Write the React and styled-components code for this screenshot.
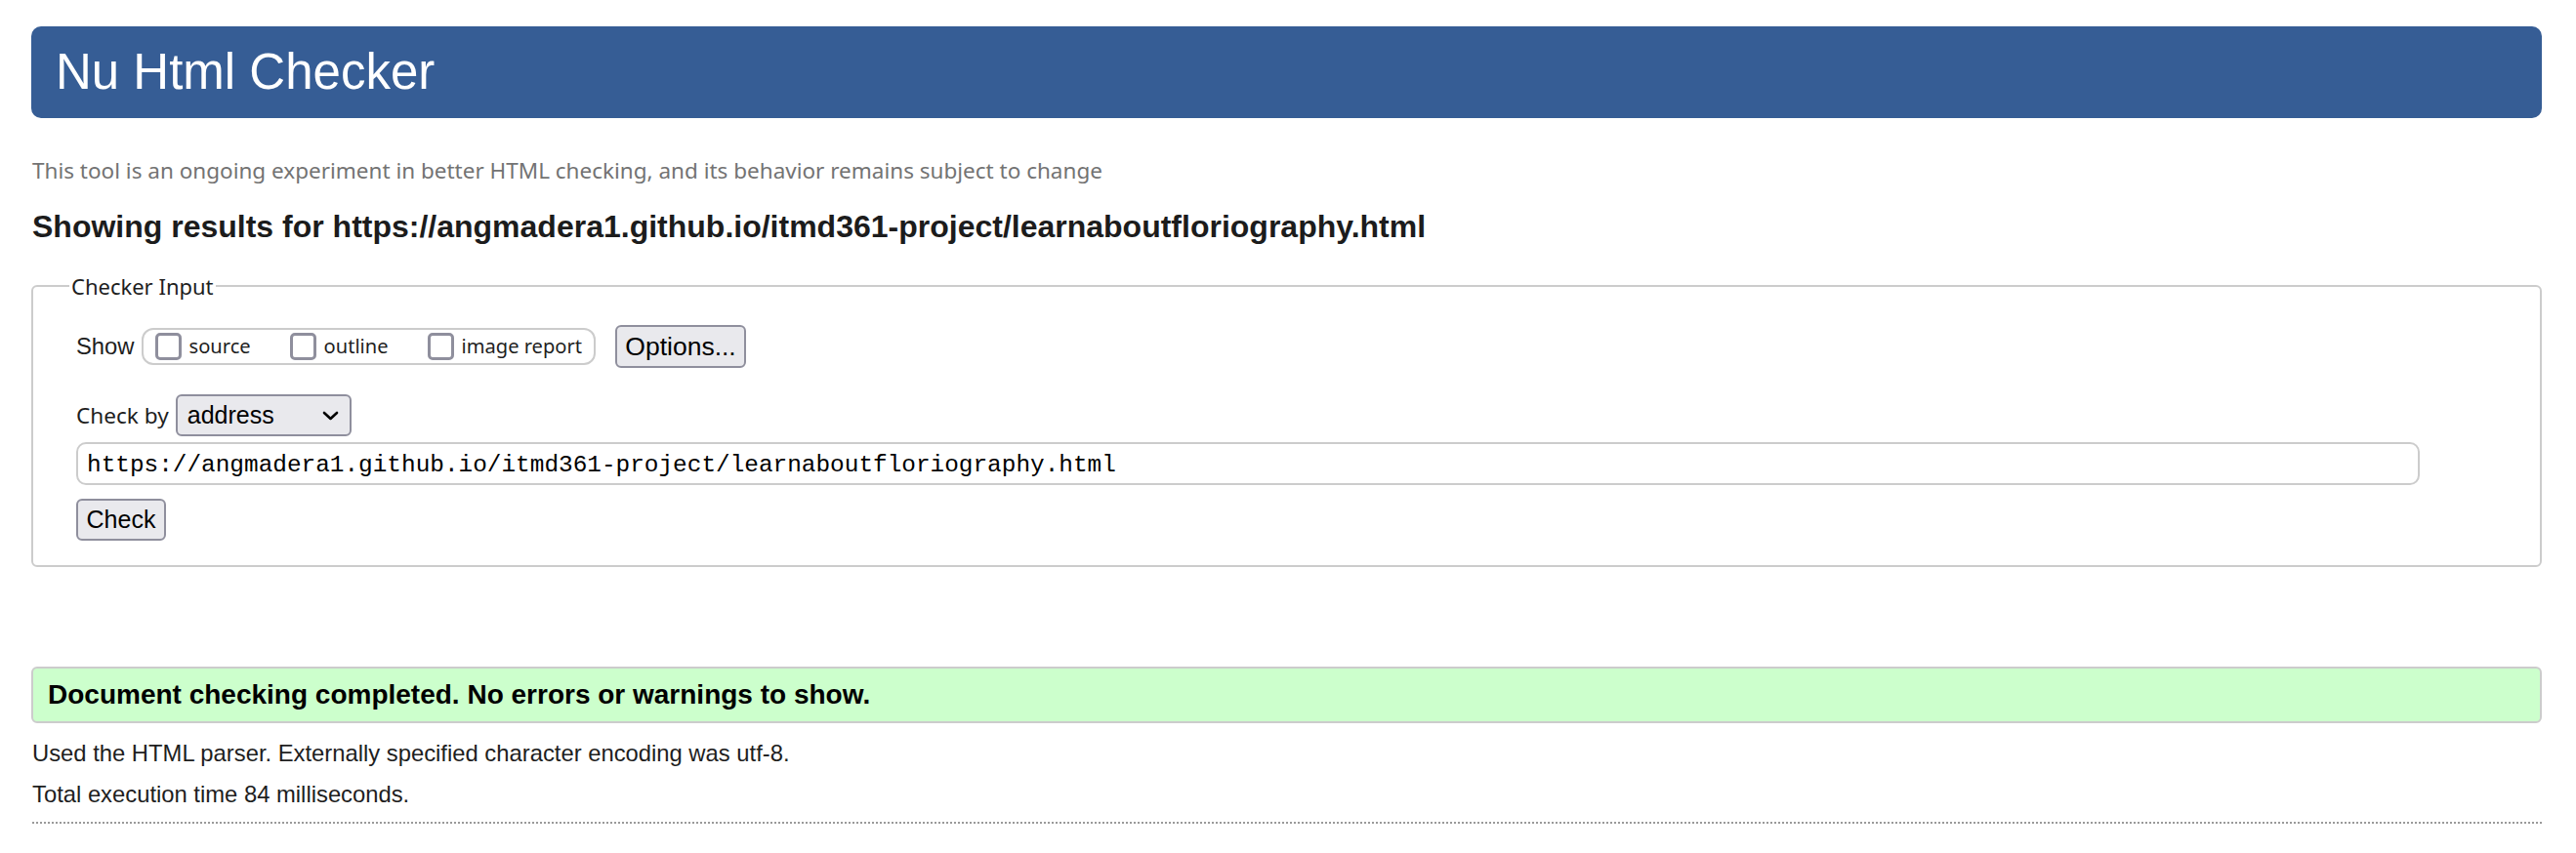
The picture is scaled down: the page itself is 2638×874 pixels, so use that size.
import React from "react";
import styled, { createGlobalStyle } from "styled-components";

const Global = createGlobalStyle`
  html, body { margin: 0; padding: 0; background: #ffffff; }
  body { font-family: "Liberation Sans", Arial, sans-serif; color: #1e1e1e; }
  * { box-sizing: border-box; }
`;

const Page = styled.div`
  padding: 27px 35px 0 32px;
  display: flex;
  flex-direction: column;
`;

const Title = styled.h1`
  margin: 0;
  height: 94px;
  display: flex;
  align-items: center;
  padding-left: 25px;
  background: #365d95;
  border-radius: 10px;
  color: #ffffff;
  font-family: "Liberation Sans", Arial, sans-serif;
  font-weight: 400;
  font-size: 51px;
  line-height: 60px;
`;

const Intro = styled.p`
  margin: 39px 0 0 1px;
  font-family: "Noto Sans", "Open Sans", sans-serif;
  font-size: 22.5px;
  line-height: 30px;
  color: #737373;
`;

const ResultsFor = styled.h2`
  margin: 24px 0 0 1px;
  font-family: "Liberation Sans", Arial, sans-serif;
  font-weight: 700;
  font-size: 32px;
  line-height: 37px;
  color: #1c1c1c;
`;

const Fieldset = styled.fieldset`
  margin: 27px 0 0 0;
  min-width: 0;
  padding: 0 123px 0 44px;
  border: 2px solid #cccccc;
  border-radius: 6px;
`;

const Legend = styled.legend`
  margin-left: -7px;
  padding: 0 2px;
  font-family: "Noto Sans", "Open Sans", sans-serif;
  font-size: 22px;
  line-height: 30px;
  color: #1e1e1e;
`;

const FormBody = styled.div`
  display: flex;
  flex-direction: column;
  align-items: flex-start;
  padding: 25px 0 25px 0;
`;

const Row = styled.div`
  display: flex;
  align-items: center;
  gap: 7px;
  margin-top: ${(p) => p.$top || 0}px;
`;

const Label = styled.span`
  font-family: ${(p) =>
    p.$ui ? `"Noto Sans", "Open Sans", sans-serif` : `"Liberation Sans", Arial, sans-serif`};
  font-size: ${(p) => (p.$ui ? 22.6 : 23.8)}px;
  line-height: 30px;
  color: #1e1e1e;
`;

const CheckGroup = styled.div`
  display: flex;
  align-items: center;
  gap: 40px;
  height: 38px;
  padding: 0 12px;
  border: 2px solid #cccccc;
  border-radius: 12px;
`;

const CheckItem = styled.label`
  display: flex;
  align-items: center;
  gap: 8px;
  font-family: "Noto Sans", "Open Sans", sans-serif;
  font-size: 20.1px;
  line-height: 28px;
  color: #1e1e1e;
`;

const Box = styled.span`
  width: 27px;
  height: 28px;
  border: 3px solid #8f8f9d;
  border-radius: 5px;
  background: #ffffff;
`;

const Button = styled.button`
  display: flex;
  align-items: center;
  justify-content: center;
  width: ${(p) => p.$w}px;
  height: ${(p) => p.$h}px;
  margin-left: ${(p) => p.$ml || 0}px;
  padding: 0;
  background: #e9e9ed;
  border: 2px solid #8f8f9d;
  border-radius: 6px;
  font-family: "Liberation Sans", Arial, sans-serif;
  font-size: ${(p) => p.$fs || 25}px;
  color: #000000;
`;

const Select = styled.div`
  display: flex;
  align-items: center;
  justify-content: space-between;
  width: 180px;
  height: 43px;
  padding: 0 11px 0 10px;
  background: #e9e9ed;
  border: 2px solid #8f8f9d;
  border-radius: 6px;
  font-family: "Liberation Sans", Arial, sans-serif;
  font-size: 25px;
  color: #000000;
`;

const UrlInput = styled.div`
  width: 100%;
  height: 44px;
  margin-top: 6px;
  display: flex;
  align-items: center;
  padding: 3px 9px 0 9px;
  border: 2px solid #cccccc;
  border-radius: 10px;
  font-family: "Liberation Mono", "DejaVu Sans Mono", monospace;
  font-size: 24.4px;
  color: #000000;
  white-space: nowrap;
`;

const CheckRow = styled.div`
  margin-top: 14px;
`;

const Success = styled.div`
  margin-top: 102px;
  height: 58px;
  padding-left: 15px;
  background: #ccffcc;
  border: 2px solid #cccccc;
  border-radius: 6px;
  font-family: "Liberation Sans", Arial, sans-serif;
  font-weight: 700;
  font-size: 28px;
  line-height: 54px;
  color: #000000;
`;

const Detail = styled.p`
  margin: ${(p) => p.$top}px 0 0 1px;
  font-family: "Liberation Sans", Arial, sans-serif;
  font-size: 23.8px;
  line-height: 30px;
  color: #1e1e1e;
`;

const Rule = styled.div`
  margin-top: 13px;
  margin-left: 1px;
  border-top: 2px dotted #9a9a9a;
`;

const Chevron = () => (
  <svg width="17" height="10" viewBox="0 0 17 10" aria-hidden="true">
    <polyline points="2,2 8.5,8 15,2" fill="none" stroke="#000" strokeWidth="2.6" strokeLinecap="round" strokeLinejoin="round" />
  </svg>
);

const URL = "https://angmadera1.github.io/itmd361-project/learnaboutfloriography.html";

export default function App() {
  return (
    <>
      <Global />
      <Page>
        <Title>Nu Html Checker</Title>
        <Intro>
          This tool is an ongoing experiment in better HTML checking, and its behavior remains subject to change
        </Intro>
        <ResultsFor>Showing results for {URL}</ResultsFor>
        <Fieldset>
          <Legend>Checker Input</Legend>
          <FormBody>
            <Row>
              <Label>Show</Label>
              <CheckGroup>
                <CheckItem><Box />source</CheckItem>
                <CheckItem><Box />outline</CheckItem>
                <CheckItem><Box />image report</CheckItem>
              </CheckGroup>
              <Button $w={134} $h={44} $ml={13} $fs={26.5}>Options...</Button>
            </Row>
            <Row $top={27}>
              <Label $ui>Check by</Label>
              <Select>
                <span>address</span>
                <Chevron />
              </Select>
            </Row>
            <UrlInput>{URL}</UrlInput>
            <CheckRow>
              <Button $w={92} $h={43}>Check</Button>
            </CheckRow>
          </FormBody>
        </Fieldset>
        <Success>Document checking completed. No errors or warnings to show.</Success>
        <Detail $top={16}>Used the HTML parser. Externally specified character encoding was utf-8.</Detail>
        <Detail $top={12}>Total execution time 84 milliseconds.</Detail>
        <Rule />
      </Page>
    </>
  );
}
